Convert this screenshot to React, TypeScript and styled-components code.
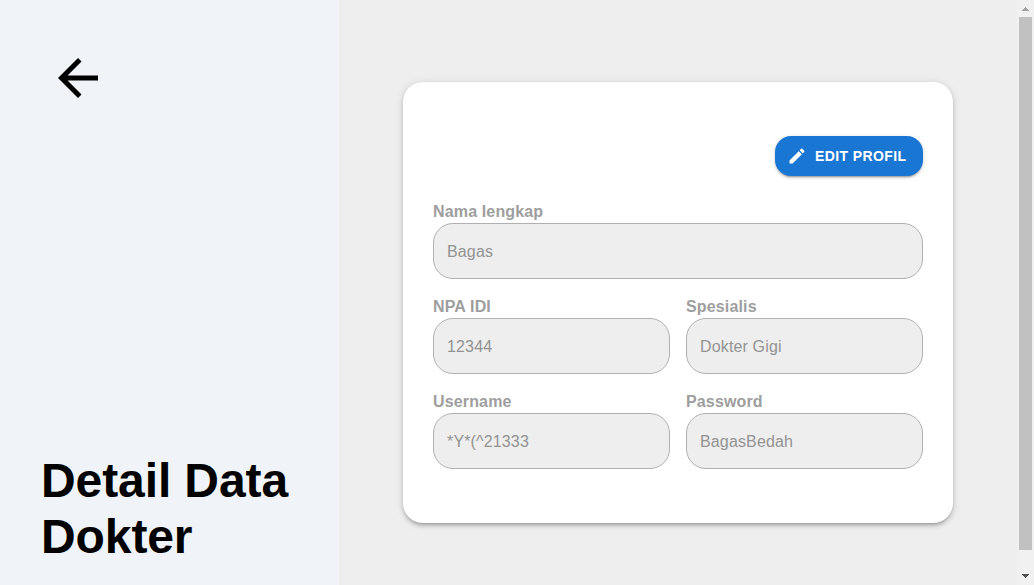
import React from "react";
import styled, { createGlobalStyle } from "styled-components";

const GlobalStyle = createGlobalStyle`
  *, *::before, *::after { box-sizing: border-box; }
  body { margin: 0; overflow: hidden; background: #eeeeee; font-family: "Liberation Sans", Arial, sans-serif; }
`;

const Page = styled.div`
  display: flex;
  height: 585px;
  background: #eeeeee;
`;

const Sidebar = styled.aside`
  display: flex;
  flex-direction: column;
  justify-content: space-between;
  width: 339px;
  padding: 48px 40px 20px 41px;
  background: #f0f4f9;
`;

const BackButton = styled.button`
  width: 60px;
  height: 60px;
  margin-left: 7px;
  padding: 0;
  border: 0;
  background: none;
  color: #000;
  svg { display: block; width: 60px; height: 60px; fill: currentColor; }
`;

const Title = styled.h1`
  margin: 0;
  font-size: 48px;
  line-height: 56px;
  font-weight: 700;
  letter-spacing: -0.1px;
  color: #000;
`;

const Main = styled.main`
  flex: 1;
  display: flex;
  padding: 82px 64px 62px;
`;

const Card = styled.section`
  width: 550px;
  height: 441px;
  padding: 54px 30px;
  border-radius: 20px;
  background: #fff;
  box-shadow: 0 3px 3px -2px rgba(0, 0, 0, 0.2), 0 3px 4px 0 rgba(0, 0, 0, 0.14), 0 1px 8px 0 rgba(0, 0, 0, 0.12);
`;

const Actions = styled.div`
  display: flex;
  justify-content: flex-end;
`;

const EditButton = styled.button`
  display: flex;
  align-items: center;
  width: 148px;
  height: 40px;
  padding: 0 0 0 12px;
  gap: 8px;
  border: 0;
  border-radius: 16px;
  background: #1976d2;
  color: #fff;
  font: 700 14px/24px "Liberation Sans", Arial, sans-serif;
  letter-spacing: 0.4px;
  white-space: nowrap;
  box-shadow: 0 3px 1px -2px rgba(0, 0, 0, 0.2), 0 2px 2px 0 rgba(0, 0, 0, 0.14), 0 1px 5px 0 rgba(0, 0, 0, 0.12);
  svg { width: 20px; height: 20px; fill: currentColor; }
`;

const Form = styled.form`
  display: grid;
  grid-template-columns: 1fr 1fr;
  gap: 16px;
  margin-top: 24px;
`;

const Field = styled.div<{ $wide?: boolean }>`
  display: flex;
  flex-direction: column;
  min-width: 0;
  grid-column: ${(p) => (p.$wide ? "1 / -1" : "auto")};
`;

const Label = styled.label`
  height: 23px;
  font-size: 16px;
  font-weight: 700;
  line-height: 23px;
  letter-spacing: 0.15px;
  color: #9e9e9e;
`;

const Input = styled.input`
  width: 100%;
  height: 56px;
  padding: 2px 13px 0;
  border: 1px solid #b0b0b0;
  border-radius: 20px;
  background: #eeeeee;
  color: #939393;
  font: 400 16px "Liberation Sans", Arial, sans-serif;
  letter-spacing: 0.15px;
`;

const Scrollbar = styled.div`
  display: flex;
  flex-direction: column;
  align-items: center;
  width: 17px;
  background: #f1f1f1;
`;

const ScrollArrow = styled.svg`
  display: block;
  width: 17px;
  height: 17px;
`;

const Thumb = styled.div`
  width: 13px;
  height: 533px;
  margin-bottom: 18px;
  background: #c1c1c1;
`;

const fields = [
  { id: "nama", label: "Nama lengkap", value: "Bagas", wide: true },
  { id: "npa", label: "NPA IDI", value: "12344" },
  { id: "spesialis", label: "Spesialis", value: "Dokter Gigi" },
  { id: "username", label: "Username", value: "*Y*(^21333" },
  { id: "password", label: "Password", value: "BagasBedah" },
];

export default function App() {
  return (
    <>
      <GlobalStyle />
      <Page>
        <Sidebar>
          <BackButton aria-label="Kembali">
            <svg viewBox="0 0 24 24">
              <path d="M20 11H7.83l5.59-5.59L12 4l-8 8 8 8 1.41-1.41L7.83 13H20v-2z" />
            </svg>
          </BackButton>
          <Title>
            Detail Data
            <br />
            Dokter
          </Title>
        </Sidebar>
        <Main>
          <Card>
            <Actions>
              <EditButton>
                <svg viewBox="0 0 24 24">
                  <path d="M3 17.25V21h3.75L17.81 9.94l-3.75-3.75L3 17.25zM20.71 7.04c.39-.39.39-1.02 0-1.41l-2.34-2.34a.9959.9959 0 0 0-1.41 0l-1.83 1.83 3.75 3.75 1.83-1.83z" />
                </svg>
                EDIT PROFIL
              </EditButton>
            </Actions>
            <Form>
              {fields.map((f) => (
                <Field key={f.id} $wide={f.wide}>
                  <Label htmlFor={f.id}>{f.label}</Label>
                  <Input id={f.id} defaultValue={f.value} disabled />
                </Field>
              ))}
            </Form>
          </Card>
        </Main>
        <Scrollbar>
          <ScrollArrow viewBox="0 0 17 17" shapeRendering="crispEdges">
            <path fill="#a3a3a3" d="M8 7h1v1h1v1h1v1h1v1H5v-1h1V9h1V8h1z" />
          </ScrollArrow>
          <Thumb />
          <ScrollArrow viewBox="0 0 17 17" shapeRendering="crispEdges">
            <path fill="#505050" d="M5 6h7v1h-1v1h-1v1H9v1H8V9H7V8H6V7H5z" />
          </ScrollArrow>
        </Scrollbar>
      </Page>
    </>
  );
}
